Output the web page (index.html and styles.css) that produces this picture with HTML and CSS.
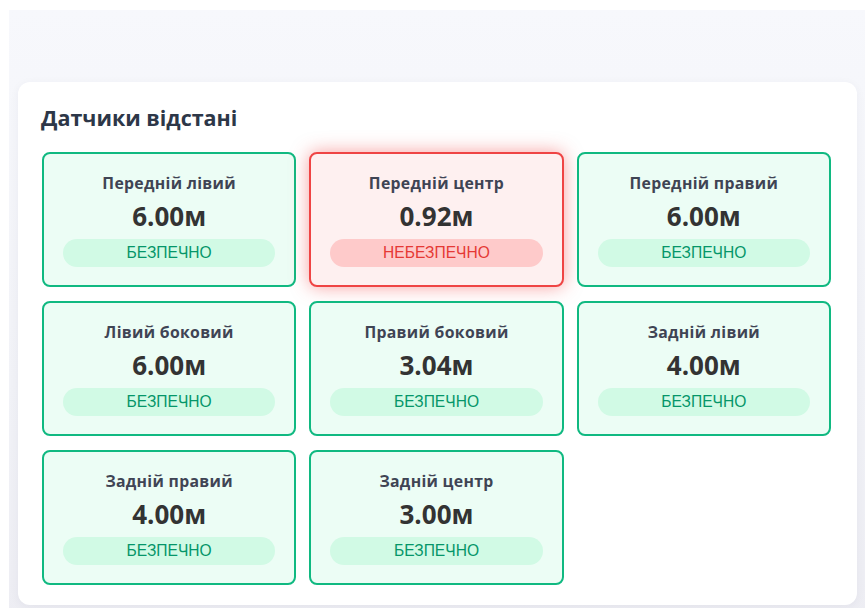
FILE: index.html
```html
<!DOCTYPE html>
<html lang="uk">
<head>
<meta charset="utf-8">
<title>Датчики відстані</title>
<link rel="stylesheet" href="styles.css">
</head>
<body>
<div class="app">
  <section class="panel">
    <h2 class="panel-title">Датчики відстані</h2>
    <div class="sensor-grid">
      <div class="sensor safe">
        <div class="sensor-name">Передній лівий</div>
        <div class="sensor-value">6.00м</div>
        <div class="sensor-status">БЕЗПЕЧНО</div>
      </div>
      <div class="sensor danger">
        <div class="sensor-name">Передній центр</div>
        <div class="sensor-value">0.92м</div>
        <div class="sensor-status">НЕБЕЗПЕЧНО</div>
      </div>
      <div class="sensor safe">
        <div class="sensor-name">Передній правий</div>
        <div class="sensor-value">6.00м</div>
        <div class="sensor-status">БЕЗПЕЧНО</div>
      </div>
      <div class="sensor safe">
        <div class="sensor-name">Лівий боковий</div>
        <div class="sensor-value">6.00м</div>
        <div class="sensor-status">БЕЗПЕЧНО</div>
      </div>
      <div class="sensor safe">
        <div class="sensor-name">Правий боковий</div>
        <div class="sensor-value">3.04м</div>
        <div class="sensor-status">БЕЗПЕЧНО</div>
      </div>
      <div class="sensor safe">
        <div class="sensor-name">Задній лівий</div>
        <div class="sensor-value">4.00м</div>
        <div class="sensor-status">БЕЗПЕЧНО</div>
      </div>
      <div class="sensor safe">
        <div class="sensor-name">Задній правий</div>
        <div class="sensor-value">4.00м</div>
        <div class="sensor-status">БЕЗПЕЧНО</div>
      </div>
      <div class="sensor safe">
        <div class="sensor-name">Задній центр</div>
        <div class="sensor-value">3.00м</div>
        <div class="sensor-status">БЕЗПЕЧНО</div>
      </div>
    </div>
  </section>
</div>
</body>
</html>
```
FILE: styles.css
```css
html, body {
  margin: 0;
  background: #ffffff;
  overflow: hidden;
}

body {
  padding: 10px 0 0 9px;
  font-family: "Open Sans", "Noto Sans", "Liberation Sans", sans-serif;
}

.app {
  width: 856px;
  min-height: 620px;
  box-sizing: border-box;
  padding: 72px 8px 0 9px;
  background: linear-gradient(180deg, #f7f8fc 0%, #f1f2f7 60%, #ededf3 100%);
}

.panel {
  width: 839px;
  box-sizing: border-box;
  background: #ffffff;
  border-radius: 12px;
  padding: 22px 26px 20px 24px;
  box-shadow: 0 2px 10px rgba(30, 40, 80, 0.05);
}

.panel-title {
  margin: 0 0 20px -1px;
  font-size: 21.5px;
  line-height: 28px;
  font-weight: 700;
  color: #2d3748;
}

.sensor-grid {
  display: grid;
  grid-template-columns: repeat(3, 1fr);
  column-gap: 13px;
  row-gap: 14px;
}

.sensor {
  height: 135px;
  box-sizing: border-box;
  border: 2px solid #10b981;
  border-radius: 8px;
  background: #ecfdf5;
  padding: 19px 19px 0 19px;
  display: flex;
  flex-direction: column;
  align-items: stretch;
  text-align: center;
}

.sensor-name {
  font-size: 15.8px;
  line-height: 20px;
  font-weight: 700;
  color: #3f4454;
  letter-spacing: 0.3px;
}

.sensor-value {
  margin-top: 8px;
  font-size: 26px;
  line-height: 31px;
  font-weight: 700;
  color: #333333;
}

.sensor-status {
  margin-top: 7px;
  height: 28px;
  line-height: 28px;
  border-radius: 14px;
  font-family: "Liberation Sans", Arial, sans-serif;
  font-size: 15.6px;
  background: #d1fae5;
  color: #059669;
}

.sensor.danger {
  border-color: #ef4444;
  background: #fef0f0;
  box-shadow: 0 0 18px rgba(239, 68, 68, 0.5);
}

.sensor.danger .sensor-status {
  background: #fecaca;
  color: #e53935;
}
```
